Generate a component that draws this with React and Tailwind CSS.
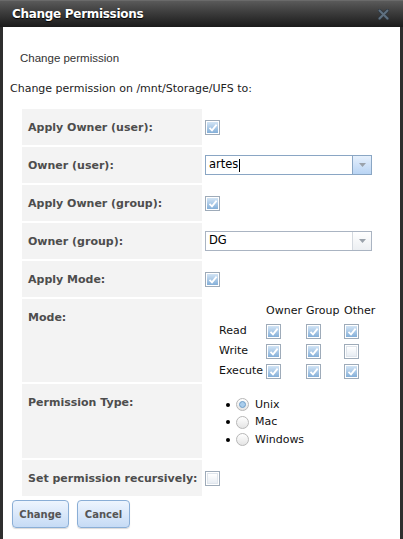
import { useState } from "react";

const sans = "font-['DejaVu_Sans',Verdana,sans-serif]";

function CheckBox({ checked }) {
  return (
    <span className="inline-flex h-[15px] w-[15px] items-center justify-center border border-[#9eabb9] bg-white p-[1px]">
      <span
        className={
          "flex h-full w-full items-center justify-center " +
          (checked
            ? "bg-gradient-to-b from-[#d2e4f5] to-[#84afd8]"
            : "bg-gradient-to-b from-[#ffffff] to-[#e8edf3] border border-[#dfe5ec]")
        }
      >
        {checked && (
          <svg width="10" height="9" viewBox="0 0 10 9">
            <path d="M1.5 4.8 L4 7.3 L8.6 1.6" fill="none" stroke="#ffffff" strokeWidth="1.8" />
          </svg>
        )}
      </span>
    </span>
  );
}

function Radio({ checked }) {
  return (
    <span className="inline-flex h-[13px] w-[13px] items-center justify-center rounded-full border border-[#b7b7b7] bg-gradient-to-b from-[#ffffff] to-[#e4e4e4]">
      {checked && <span className="h-[7px] w-[7px] rounded-full border border-[#6f9fc9] bg-[#a9cdec]" />}
    </span>
  );
}

function Select({ value, focused }) {
  return (
    <div
      className={
        "flex h-[20px] w-[167px] items-stretch border bg-white " +
        (focused ? "border-[#8aa6c4]" : "border-[#aab4c2]")
      }
    >
      <div className="flex flex-1 items-center pl-[3px] text-[11.5px] leading-none text-black">
        {value}
        {focused && <span className="ml-[1px] inline-block h-[13px] w-[1px] bg-black" />}
      </div>
      <div
        className={
          "flex w-[19px] items-center justify-center border-l " +
          (focused
            ? "border-[#8aa6c4] bg-gradient-to-b from-[#e6f0fc] to-[#b9d4f4]"
            : "border-[#d4d9df] bg-gradient-to-b from-[#ffffff] to-[#eceff2]")
        }
      >
        <svg width="7" height="4" viewBox="0 0 7 4">
          <path d="M0 0 L7 0 L3.5 4 Z" fill="#9aa2ab" />
        </svg>
      </div>
    </div>
  );
}

function Row({ label, height = "h-[36px]", top, children }) {
  return (
    <div className={"flex " + height}>
      <div className="w-[180px] shrink-0 bg-[#f3f3f3] pl-[6px] pt-[12px] text-[11px] font-bold leading-[13px] text-[#4d4d4d]">
        {label}
      </div>
      <div className={"flex flex-1 pl-[3px] " + (top ? "items-start" : "items-center")}>{children}</div>
    </div>
  );
}

export default function App() {
  const [mode] = useState([
    ["Read", [true, true, true]],
    ["Write", [true, true, false]],
    ["Execute", [true, true, true]],
  ]);

  return (
    <div className={"flex h-[539px] w-[403px] flex-col overflow-hidden bg-white " + sans}>
      {/* title bar */}
      <div className="flex h-[27px] shrink-0 items-center justify-between border-t border-[#6a6a6a] bg-gradient-to-b from-[#5a5a5a] to-[#1b1b1b] pl-[12px] pr-[14px]">
        <span className="text-[12px] font-bold tracking-[-0.3px] text-white [text-shadow:0_1px_1px_#000]">
          Change Permissions
        </span>
        <svg width="11" height="11" viewBox="0 0 11 11">
          <path d="M1.5 1.5 L9.5 9.5 M9.5 1.5 L1.5 9.5" stroke="#2f3840" strokeWidth="3.4" strokeLinecap="round" />
          <path d="M1.5 1.5 L9.5 9.5 M9.5 1.5 L1.5 9.5" stroke="#5f7080" strokeWidth="2" strokeLinecap="round" />
        </svg>
      </div>

      <div className="flex flex-1 flex-col border-x-[3px] border-[#2e2e2e] pl-[7px]">
        <div className="mt-[24px] h-[14px] pl-[10px] font-['Liberation_Sans',Arial,sans-serif] text-[11.5px] leading-[14px] text-[#333]">
          Change permission
        </div>
        <div className="mt-[17px] h-[13px] text-[11px] leading-[13px] text-[#222]">
          Change permission on /mnt/Storage/UFS to:
        </div>

        <div className="mt-[14px] ml-[12px] flex flex-col gap-[2px]">
          <Row label="Apply Owner (user):">
            <CheckBox checked />
          </Row>
          <Row label="Owner (user):">
            <Select value="artes" focused />
          </Row>
          <Row label="Apply Owner (group):">
            <CheckBox checked />
          </Row>
          <Row label="Owner (group):">
            <Select value="DG" />
          </Row>
          <Row label="Apply Mode:">
            <CheckBox checked />
          </Row>
          <Row label="Mode:" height="h-[83px]" top>
            <div className="ml-[14px] mt-[2px] grid grid-cols-[47px_40px_38px_auto] auto-rows-[20px] items-center text-[11px] text-[#111]">
              <span />
              <span>Owner</span>
              <span>Group</span>
              <span>Other</span>
              {mode.map(([name, bits]) => [
                <span key={name}>{name}</span>,
                ...bits.map((b, i) => (
                  <span key={name + i} className="flex">
                    <CheckBox checked={b} />
                  </span>
                )),
              ])}
            </div>
          </Row>
          <Row label="Permission Type:" height="h-[74px]" top>
            <ul className="ml-[21px] mt-[12px] flex flex-col text-[11px] text-[#111]">
              {["Unix", "Mac", "Windows"].map((t, i) => (
                <li key={t} className="flex h-[17.5px] items-center">
                  <span className="h-[4px] w-[4px] rounded-full bg-black" />
                  <span className="ml-[6px] flex">
                    <Radio checked={i === 0} />
                  </span>
                  <span className="ml-[6px]">{t}</span>
                </li>
              ))}
            </ul>
          </Row>
          <Row label="Set permission recursively:">
            <CheckBox />
          </Row>
        </div>

        <div className="mt-[4px] flex gap-[8px] pl-[2px]">
          <button className="h-[28px] w-[57px] rounded-[4px] border border-[#8aaed6] bg-gradient-to-b from-[#eef5fe] to-[#c6dbf5] text-[10px] font-bold text-[#555] shadow-[0_1px_1px_rgba(0,0,0,0.15)]">
            Change
          </button>
          <button className="h-[28px] w-[53px] rounded-[4px] border border-[#8aaed6] bg-gradient-to-b from-[#eef5fe] to-[#c6dbf5] text-[10px] font-bold text-[#555] shadow-[0_1px_1px_rgba(0,0,0,0.15)]">
            Cancel
          </button>
        </div>
      </div>
    </div>
  );
}
